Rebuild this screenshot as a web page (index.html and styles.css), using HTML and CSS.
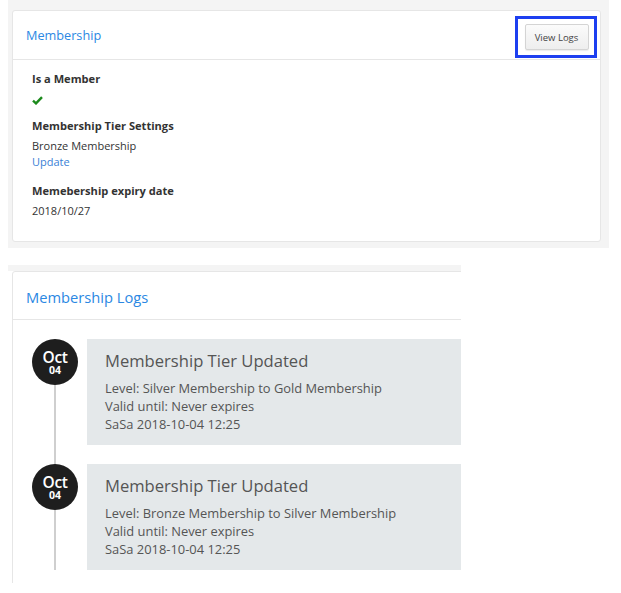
FILE: index.html
```html
<!DOCTYPE html>
<html lang="en">
<head>
  <meta charset="UTF-8">
  <title>Membership</title>
  <link rel="stylesheet" href="styles.css">
</head>
<body>
  <div class="panel-wrap">
    <div class="panel">
      <div class="panel-heading">
        <h3 class="panel-title">Membership</h3>
        <span class="highlight">
          <button class="btn" type="button">View Logs</button>
        </span>
      </div>
      <div class="panel-body">
        <div class="field">
          <div class="field-label">Is a Member</div>
          <div class="field-value check">
            <svg width="11" height="9" viewBox="0 0 11 9"><path d="M1 4.6 L4 7.4 L10 1.2" fill="none" stroke="#1c8a1c" stroke-width="2.4"/></svg>
          </div>
        </div>
        <div class="field">
          <div class="field-label">Membership Tier Settings</div>
          <div class="field-value">Bronze Membership</div>
          <a class="link" href="#">Update</a>
        </div>
        <div class="field">
          <div class="field-label">Memebership expiry date</div>
          <div class="field-value">2018/10/27</div>
        </div>
      </div>
    </div>
  </div>

  <div class="logs-wrap">
    <div class="panel logs-panel">
      <div class="panel-heading logs-heading">
        <h3 class="panel-title logs-title">Membership Logs</h3>
      </div>
      <div class="timeline">
        <div class="tl-item">
          <div class="tl-date"><span class="month">Oct</span><span class="day">04</span></div>
          <div class="tl-box">
            <div class="tl-title">Membership Tier Updated</div>
            <div class="tl-line">Level: Silver Membership to Gold Membership</div>
            <div class="tl-line">Valid until: Never expires</div>
            <div class="tl-line">SaSa 2018-10-04 12:25</div>
          </div>
        </div>
        <div class="tl-item">
          <div class="tl-date"><span class="month">Oct</span><span class="day">04</span></div>
          <div class="tl-box">
            <div class="tl-title">Membership Tier Updated</div>
            <div class="tl-line">Level: Bronze Membership to Silver Membership</div>
            <div class="tl-line">Valid until: Never expires</div>
            <div class="tl-line">SaSa 2018-10-04 12:25</div>
          </div>
        </div>
      </div>
    </div>
  </div>
</body>
</html>
```

FILE: styles.css
```css
body {
  margin: 0;
  background: #fff;
  font-family: "Open Sans", "DejaVu Sans", sans-serif;
  color: #333;
}
.panel-wrap {
  margin-left: 8px;
  width: 601px;
  height: 248px;
  box-sizing: border-box;
  padding: 10px 8px 0 4px;
  background: #f4f4f4;
}
.panel {
  background: #fff;
  border: 1px solid #e6e6e6;
  border-radius: 3px;
  box-sizing: border-box;
}
.panel-wrap .panel {
  height: 232px;
}
.panel-heading {
  display: flex;
  align-items: center;
  justify-content: space-between;
  height: 48px;
  padding: 0 3px 0 13px;
  border-bottom: 1px solid #e6e6e6;
}
.panel-title {
  margin: 0;
  font-size: 12.7px;
  font-weight: 400;
  color: #2b88e3;
}
.highlight {
  display: flex;
  align-items: center;
  justify-content: center;
  width: 82px;
  height: 42px;
  box-sizing: border-box;
  border: 3px solid #1d3ff0;
  margin-top: 4px;
}
.btn {
  width: 64px;
  height: 26px;
  padding: 0;
  font-family: inherit;
  font-size: 9.5px;
  color: #444;
  background: linear-gradient(#fbfbfb, #eeeeee);
  border: 1px solid #d4d4d4;
  border-radius: 2px;
  box-shadow: 0 1px 1px rgba(0,0,0,0.08);
  margin-left: 1px;
}
.panel-body {
  padding: 11px 19px;
}
.field {
  margin-bottom: 13px;
}
.field-label {
  font-size: 11.1px;
  font-weight: 700;
  color: #333;
  line-height: 16px;
  margin-bottom: 4px;
}
.field-value {
  font-size: 11px;
  line-height: 16px;
  color: #333;
}
.check {
  height: 12px;
  padding-top: 2px;
}
.link {
  display: block;
  font-size: 11px;
  line-height: 16px;
  color: #3a7fd6;
  text-decoration: none;
}
.logs-wrap {
  margin-top: 17px;
  margin-left: 8px;
  width: 453px;
  height: 318px;
  overflow: hidden;
  box-sizing: border-box;
  padding: 6px 0 0 4px;
  background: linear-gradient(#f4f4f4 6px, #fff 6px);
}
.logs-panel {
  width: 600px;
  height: 400px;
}
.logs-heading {
  height: 48px;
  padding-top: 3px;
  box-sizing: border-box;
}
.logs-title {
  font-size: 14.7px;
}
.timeline {
  position: relative;
  padding: 19px 0 0 19px;
}
.timeline::before {
  content: "";
  position: absolute;
  left: 41px;
  top: 40px;
  bottom: 0;
  width: 2px;
  background: #cfcfcf;
}
.tl-item {
  display: flex;
  gap: 9px;
  margin-bottom: 19px;
  position: relative;
}
.tl-date {
  width: 46px;
  height: 46px;
  box-sizing: border-box;
  padding-top: 2px;
  border-radius: 50%;
  background: #1e1e1e;
  color: #fff;
  display: flex;
  flex-direction: column;
  align-items: center;
  justify-content: center;
  flex-shrink: 0;
}
.month {
  display: block;
  font-size: 15.5px;
  font-weight: 600;
  line-height: 14px;
  letter-spacing: -0.4px;
}
.day {
  display: block;
  font-size: 10.5px;
  font-weight: 700;
  line-height: 11px;
  margin-top: 1px;
}
.tl-box {
  flex: 1;
  height: 106px;
  box-sizing: border-box;
  background: #e4e8ea;
  padding: 10px 18px;
}
.tl-title {
  font-size: 16.6px;
  line-height: 24px;
  color: #555;
  margin-bottom: 6px;
}
.tl-line {
  font-size: 12.9px;
  line-height: 18px;
  color: #555;
}
```
